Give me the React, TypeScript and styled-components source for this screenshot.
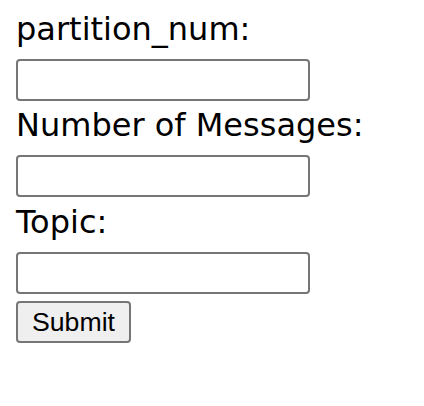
import { createGlobalStyle, styled } from "styled-components";

const GlobalStyle = createGlobalStyle`
    html, body {
        margin: 0;
        padding: 0;
        background: #ffffff;
    }
`;

const Form = styled.form`
    display: flex;
    flex-direction: column;
    align-items: flex-start;
    padding: 16px;
    font-family: "DejaVu Sans", "Liberation Sans", sans-serif;
    color: #000000;
`;

const Label = styled.label<{ $top: number }>`
    display: block;
    margin-top: ${(p) => p.$top}px;
    margin-bottom: 17px;
    font-size: 32px;
    line-height: 26px;
    white-space: nowrap;
`;

const Field = styled.input`
    box-sizing: border-box;
    width: 294px;
    height: 42px;
    margin: 0;
    padding: 2px 4px;
    border: 2px solid #767676;
    border-radius: 4px;
    background: #ffffff;
    font-family: "Liberation Sans", sans-serif;
    font-size: 26px;
`;

const SubmitButton = styled.button`
    box-sizing: border-box;
    width: 115px;
    height: 42px;
    margin-top: 7px;
    padding: 0;
    border: 2px solid #767676;
    border-radius: 4px;
    background: #efefef;
    color: #000000;
    font-family: "Liberation Sans", Arial, sans-serif;
    font-size: 26.67px;
    line-height: 36px;
    text-align: center;
`;

const fields = [
    { name: "partition_num", label: "partition_num:", top: 0 },
    { name: "num_messages", label: "Number of Messages:", top: 11 },
    { name: "topic", label: "Topic:", top: 12 },
];

export default function App() {
    return (
        <>
            <GlobalStyle />
            <Form onSubmit={(e) => e.preventDefault()}>
                {fields.map((f) => (
                    <div key={f.name}>
                        <Label htmlFor={f.name} $top={f.top}>{f.label}</Label>
                        <Field id={f.name} name={f.name} type="text" />
                    </div>
                ))}
                <SubmitButton type="submit">Submit</SubmitButton>
            </Form>
        </>
    );
}
